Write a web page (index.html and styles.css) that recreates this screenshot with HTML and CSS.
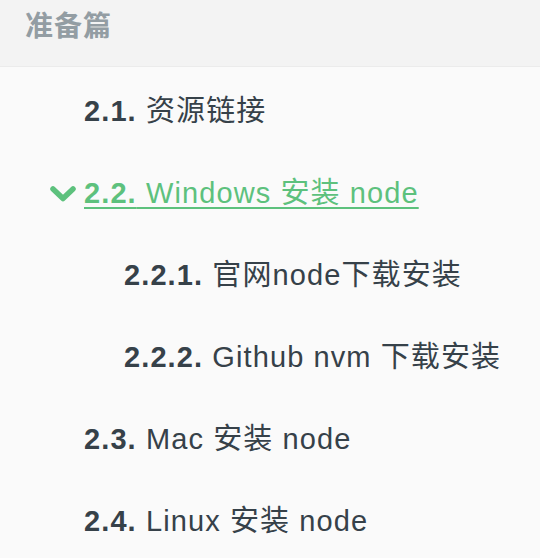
FILE: index.html
```html
<!DOCTYPE html>
<html lang="zh-CN">
<head>
  <meta charset="UTF-8" />
  <meta name="viewport" content="width=device-width, initial-scale=1.0"/>
  <title>准备篇</title>
  <link rel="stylesheet" href="styles.css">
</head>
<body>
  <div class="summary">
    <div class="header">准备篇</div>
    <ul class="chapters">
      <li class="chapter"><a href="#"><b>2.1.</b> 资源链接</a></li>
      <li class="chapter active">
        <span class="toggle">
          <svg width="26" height="16" viewBox="0 0 26 16"><polyline points="3,3 13,12.5 23,3" fill="none" stroke="#5dc17d" stroke-width="5.5" stroke-linecap="round" stroke-linejoin="round"/></svg>
        </span>
        <a href="#"><b>2.2.</b> Windows 安装 node</a>
      </li>
      <li class="chapter sub"><a href="#"><b>2.2.1.</b> 官网node下载安装</a></li>
      <li class="chapter sub"><a href="#"><b>2.2.2.</b> Github nvm 下载安装</a></li>
      <li class="chapter"><a href="#"><b>2.3.</b> Mac 安装 node</a></li>
      <li class="chapter"><a href="#"><b>2.4.</b> Linux 安装 node</a></li>
    </ul>
  </div>
</body>
</html>
```

FILE: styles.css
```css
body, html {
  margin: 0;
  padding: 0;
  height: 100%;
  font-family: 'Liberation Sans', 'Noto Sans CJK SC', sans-serif;
  background: #fafafa;
  color: #364149;
}

.header {
  background: #f3f3f3;
  border-bottom: 1px solid #ebebeb;
  height: 66px;
  box-sizing: content-box;
  padding-left: 25px;
  font-size: 28px;
  font-weight: bold;
  line-height: 54px;
  letter-spacing: 1px;
  color: #939da3;
}

.chapters {
  list-style: none;
  margin: 0;
  padding: 3px 0 0;
}

.chapter {
  position: relative;
  padding: 20px 0 20px 84px;
  font-size: 29px;
  line-height: 42px;
  letter-spacing: 1.1px;
}

.chapter.sub {
  padding-left: 124px;
}

.chapter a {
  color: #364149;
  text-decoration: none;
}

.chapter.active a {
  color: #5dc17d;
  text-decoration: underline;
  text-decoration-thickness: 2px;
  text-underline-offset: 4px;
}

.toggle {
  position: absolute;
  left: 50px;
  top: 34px;
  line-height: 0;
}
```
